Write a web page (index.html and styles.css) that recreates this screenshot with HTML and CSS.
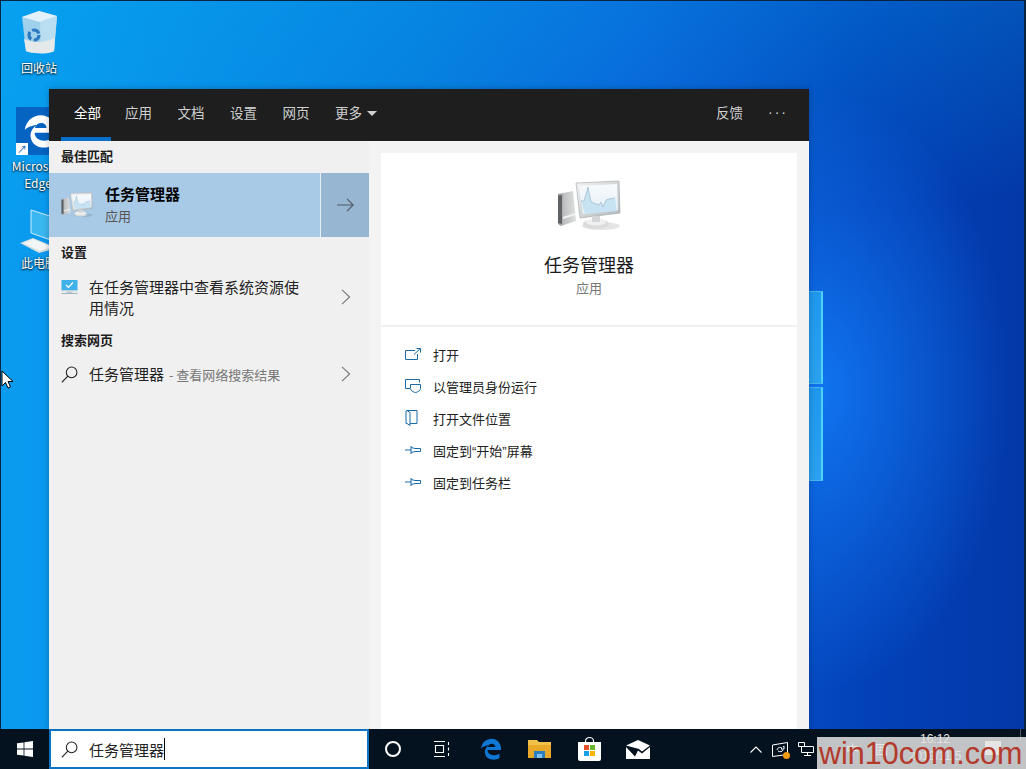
FILE: index.html
```html
<!DOCTYPE html>
<html lang="zh-CN">
<head>
<meta charset="utf-8">
<title>任务管理器</title>
<link rel="stylesheet" href="styles.css">
</head>
<body>
<svg width="0" height="0" class="defs">
  <defs>
    <linearGradient id="bezel" x1="0" y1="0" x2="1" y2="1"><stop offset="0" stop-color="#f4f4f4"/><stop offset="1" stop-color="#b4b8ba"/></linearGradient>
    <linearGradient id="tower" x1="0" y1="0" x2="1" y2="0"><stop offset="0" stop-color="#8b8e90"/><stop offset=".35" stop-color="#bfc1c2"/><stop offset="1" stop-color="#dfe0e0"/></linearGradient>
    <linearGradient id="screen" x1="0" y1="0" x2="0" y2="1"><stop offset="0" stop-color="#f7fafc"/><stop offset="1" stop-color="#e4f0f8"/></linearGradient>
    <symbol id="taskmgr" viewBox="0 0 64 52">
      <ellipse cx="44" cy="46" rx="19" ry="4" fill="#000" opacity=".1"/>
      <path d="M1 14l15-3 3 30-15 5c-2-1-3-2-3-4z" fill="url(#tower)"/>
      <path d="M1 16l4-1v29l-4-1z" fill="#5f6264"/>
      <path d="M6 37l12-4v2l-12 4z" fill="#f2f2f2"/>
      <path d="M19 3l43-2 1 32-40 5z" fill="url(#bezel)" stroke="#9ea3a6" stroke-width=".6"/>
      <path d="M22 6l38-2 1 26-35 4z" fill="url(#screen)"/>
      <path d="M24 21l3 0 4-14 3 15 5 2 3 1 2-3 2 5 3-7 3-1 6-1 2 13-32 3z" fill="#c6e2f3"/>
      <path d="M24 21l3 0 4-14 3 15 5 2 3 1 2-3 2 5 3-7 3-1 6-1" fill="none" stroke="#9db8c9" stroke-width=".7"/>
      <ellipse cx="39" cy="44" rx="13" ry="5" fill="#d9dbdc"/>
      <ellipse cx="39" cy="42" rx="10" ry="3.5" fill="#f0f0f0"/>
      <rect x="35" y="36" width="8" height="6" fill="#d3d5d6"/>
    </symbol>
    <symbol id="search" viewBox="0 0 16 16">
      <circle cx="10" cy="6" r="5" fill="none" stroke="currentColor" stroke-width="1"/>
      <path d="M6.400 9.600L.8 15.400" stroke="currentColor" stroke-width="1.100" fill="none"/>
    </symbol>
    <symbol id="chev" viewBox="0 0 10 16">
      <path d="M1 .8L8.600 8 1 15.200" fill="none" stroke="currentColor" stroke-width="1.100"/>
    </symbol>
    <symbol id="pin" viewBox="0 0 16 10">
      <path d="M0 5h6M6 1v8M6 2.500l4 1h5.500v3H10l-4 1" fill="none" stroke="currentColor" stroke-width="1"/>
    </symbol>
    <symbol id="edge" viewBox="0 0 24 24">
      <path d="M1.200 11.200C2.200 4.600 7.200.8 12.600.8c6.200 0 10.600 4.600 10.400 12.400H8.200c.2 5.600 7.600 7.400 13 3.600v5.400c-6.200 3-14.600 1.600-15.800-5.800C4.800 12.800 7 9.400 10 7.600 6.400 8 3 9.400 1.200 11.200zM8.400 9.800h8.200c0-4.600-7.200-4.800-8.200 0z" fill-rule="evenodd" fill="currentColor"/>
    </symbol>
  </defs>
</svg>

<main class="desktop">
  <div class="wallpaper-glow"></div>
  <div class="win-logo">
    <span class="pane pane-top"></span>
    <span class="pane pane-bottom"></span>
  </div>

  <div class="desk-icon icon-bin">
    <svg viewBox="0 0 40 44" width="40" height="44">
      <path d="M3 7l17-6 18 5-3 35c-5 3-23 3-28 0z" fill="#9fd0ec"/>
      <path d="M3 7l17-6 18 5-17 6z" fill="#e3f2fa"/>
      <path d="M21 12l17-6-3 35c-3 2-8 2.500-13 2.500z" fill="#b9def2"/>
      <path d="M5 29c10 4 20 4 31-1l-1 13c-5 3-23 3-28 0z" fill="#e6e9ea"/>
      <circle cx="15" cy="25" r="5" fill="none" stroke="#2a78c0" stroke-width="3.200" stroke-dasharray="8 2.500"/>
    </svg>
    <span class="desk-label">回收站</span>
  </div>
  <div class="desk-icon icon-edge">
    <div class="edge-tile"><svg class="edge-tile-glyph"><use href="#edge"/></svg><span class="shortcut">↗</span></div>
    <span class="desk-label">Microsoft<br>Edge</span>
  </div>
  <div class="desk-icon icon-pc">
    <svg viewBox="0 0 40 44" width="40" height="44">
      <path d="M12 1l28 9v24L12 24z" fill="#3ab6f0" stroke="#cdeefb" stroke-width="1"/>
      <path d="M1 34l13-5 24 10-18 5z" fill="#d5dcdf"/>
      <path d="M4 34l10-4 19 8-13 4z" fill="#f2f5f6"/>
    </svg>
    <span class="desk-label">此电脑</span>
  </div>

  <svg class="cursor" viewBox="0 0 12 19" width="12" height="19"><path d="M1 1v15l3.500-3.500 2.500 5.500 2.500-1-2.500-5.500H12z" fill="#fff" stroke="#000" stroke-width="1"/></svg>

  <section class="search-panel">
    <header class="tabs">
      <nav class="tab-list">
        <span class="tab tab-active">全部</span>
        <span class="tab">应用</span>
        <span class="tab">文档</span>
        <span class="tab">设置</span>
        <span class="tab">网页</span>
        <span class="tab">更多<i class="caret"></i></span>
      </nav>
      <div class="tab-tools">
        <span class="tab">反馈</span>
        <span class="dots">···</span>
      </div>
    </header>
    <div class="panel-body">
      <div class="results">
        <h2 class="group-title first">最佳匹配</h2>
        <div class="best">
          <div class="best-main">
            <svg class="best-icon"><use href="#taskmgr"/></svg>
            <div class="best-text">
              <strong>任务管理器</strong>
              <span>应用</span>
            </div>
          </div>
          <div class="best-arrow">
            <svg viewBox="0 0 17 14" width="17" height="14"><path d="M0 7h16M10 .8L16.200 7 10 13.200" fill="none" stroke="currentColor" stroke-width="1.100"/></svg>
          </div>
        </div>
        <h2 class="group-title">设置</h2>
        <div class="row row-tall">
          <svg class="row-icon" viewBox="0 0 16 15" width="16" height="15">
            <rect x="0" y="0" width="16" height="10.500" fill="#3fb0e8"/>
            <path d="M4.500 5l2.500 2.500 4.500-5" fill="none" stroke="#fff" stroke-width="1.200"/>
            <rect x="0" y="10.500" width="16" height="1" fill="#d3dbe0"/>
            <rect x="0" y="13" width="16" height="1" fill="#9db4c2"/>
            <rect x="5" y="11.500" width="6" height="1.500" fill="#c4c9cc"/>
          </svg>
          <span class="row-text">在任务管理器中查看系统资源使用情况</span>
          <svg class="row-chev"><use href="#chev"/></svg>
        </div>
        <h2 class="group-title group-web">搜索网页</h2>
        <div class="row row-web">
          <svg class="row-icon search-icon"><use href="#search"/></svg>
          <span class="row-text">任务管理器<small> - 查看网络搜索结果</small></span>
          <svg class="row-chev"><use href="#chev"/></svg>
        </div>
      </div>
      <aside class="detail-wrap">
        <div class="detail">
          <div class="detail-head">
            <svg class="detail-icon"><use href="#taskmgr"/></svg>
            <h1>任务管理器</h1>
            <p>应用</p>
          </div>
          <ul class="actions">
            <li>
              <svg viewBox="0 0 16 12" width="16" height="12"><path d="M10 2.500H.500v9h12V6M9 6.500L15 .800M11.500.500H15.500V4.500" fill="none" stroke="currentColor"/></svg>
              打开
            </li>
            <li>
              <svg viewBox="0 0 16 14" width="16" height="14"><path d="M5 9.500H.500v-9h14v3M5.500 5.500h10v4c0 2-2.500 3.500-5 4-2.500-.5-5-2-5-4z" fill="none" stroke="currentColor"/></svg>
              以管理员身份运行
            </li>
            <li>
              <svg viewBox="0 0 13 16" width="13" height="16"><path d="M2 .500h10v13H5M2 .500l3 2v13l-3-2H1V1z" fill="none" stroke="currentColor"/></svg>
              打开文件位置
            </li>
            <li><svg width="16" height="10"><use href="#pin"/></svg>固定到“开始”屏幕</li>
            <li><svg width="16" height="10"><use href="#pin"/></svg>固定到任务栏</li>
          </ul>
        </div>
      </aside>
    </div>
  </section>
</main>

<footer class="taskbar">
  <div class="start">
    <svg viewBox="0 0 16 16" width="16" height="16"><path d="M0 2.300l6.600-.9v6.200H0zM7.400 1.300L16 0v7.600H7.400zM0 8.400h6.600v6.200L0 13.700zM7.400 8.400H16V16l-8.600-1.300z" fill="#fff"/></svg>
  </div>
  <div class="searchbox">
    <svg class="search-icon"><use href="#search"/></svg>
    <span class="query">任务管理器</span><i class="caret-line"></i>
  </div>
  <div class="task-icons">
    <span class="task-slot"><i class="cortana"></i></span>
    <span class="task-slot">
      <svg viewBox="0 0 16 16" width="16" height="16"><path d="M0 .500h11M0 15.500h11M1.500 4.500h8v7h-8zM14.500 1v3M14.500 6.500v3M14.500 12v3" fill="none" stroke="#fff" stroke-width="1.100"/></svg>
    </span>
    <span class="task-slot"><svg class="task-edge"><use href="#edge"/></svg></span>
    <span class="task-slot">
      <svg viewBox="0 0 23 20" width="23" height="20"><path d="M0 1h9l2 2h12v16H0z" fill="#f0c24a"/><path d="M0 6h23v13H0z" fill="#e8a92b"/><rect x="6" y="12" width="11" height="7" fill="#2a7fc0"/><rect x="9" y="15" width="5" height="4" fill="#7fc1e8"/></svg>
    </span>
    <span class="task-slot">
      <svg viewBox="0 0 23 24" width="23" height="24"><path d="M7.500 6V4a4 3.500 0 0 1 8 0v2" fill="none" stroke="#eee" stroke-width="1.200"/><path d="M0 5h23v17a2 2 0 0 1-2 2H2a2 2 0 0 1-2-2z" fill="#fff"/><rect x="6" y="8" width="5" height="5" fill="#e8502a"/><rect x="12" y="8" width="5" height="5" fill="#6cb52d"/><rect x="6" y="14" width="5" height="5" fill="#1ba1e2"/><rect x="12" y="14" width="5" height="5" fill="#f7b500"/></svg>
    </span>
    <span class="task-slot">
      <svg viewBox="0 0 24 19" width="24" height="19"><path d="M0 5.500L12 0l12 5.500-8 6-3-2.500zM0 7v12h24V7l-8 6.500-4-3-3 6z" fill="#fff"/></svg>
    </span>
  </div>
  <div class="tray">
    <svg viewBox="0 0 12 7" width="12" height="7"><path d="M.500 6.500L6 1l5.500 5.500" fill="none" stroke="#fff" stroke-width="1.100"/></svg>
    <span class="tray-action">
      <svg viewBox="0 0 16 15" width="16" height="15"><path d="M.500 3l15-2.500v12l-15 2zM5 8c1-3 3-3 5-2l-1 1h3V4l-1 1M11 8c-1 2-3 2-5 1" fill="none" stroke="#fff"/></svg>
      <i class="badge"></i>
    </span>
    <svg viewBox="0 0 16 14" width="16" height="14"><path d="M.500.500h6v4M.500.500v4h6M3.500 4.500h12v6h-12zM9.500 10.500v3M6 13.500h7" fill="none" stroke="#fff"/></svg>
  </div>
  <div class="tray-labels"><span>中</span><span>囲</span></div>
  <div class="clock">
    <span>16:12</span>
    <span>2019/11/5</span>
  </div>
  <div class="notify"></div>
  <div class="desktop-edge"></div>
  <div class="watermark">win10com.com</div>
</footer>
</body>
</html>
```
FILE: styles.css
```css
* { box-sizing: border-box; }
html, body { margin: 0; padding: 0; }
body {
  width: 1026px;
  height: 769px;
  overflow: hidden;
  display: flex;
  flex-direction: column;
  font-family: "Noto Sans CJK SC", "Liberation Sans", sans-serif;
  position: relative;
  background: #04111f;
}
.defs { position: absolute; }

.desktop {
  position: relative;
  flex: 1;
  overflow: hidden;
  border: 1px solid #0a2440;
  border-bottom: 0;
  border-right-width: 2px;
  background: linear-gradient(90deg, #0a9cf0 0%, #0878dc 40%, #0a5ed6 62%, #0341b8 85%, #0338a8 100%);
}
.wallpaper-glow {
  position: absolute;
  inset: 0;
  background:
    radial-gradient(ellipse 190px 300px at 820px 390px, rgba(20,130,255,.75), rgba(20,120,255,0) 100%),
    linear-gradient(175deg, rgba(0,170,240,.35) 0%, rgba(0,120,230,0) 35%);
}
.win-logo {
  position: absolute;
  left: 780px;
  top: 290px;
  width: 42px;
  display: flex;
  flex-direction: column;
  gap: 3px;
}
.pane {
  display: block;
  width: 42px;
  background: linear-gradient(135deg, #1a94ee, #2aa2ee);
  border-right: 2px solid #4fd1f4;
  border-top: 1px solid #46b5ec;
  border-bottom: 1px solid #46b5ec;
}
.pane-top { height: 93px; }
.pane-bottom { height: 94px; }

.desk-icon {
  position: absolute;
  width: 76px;
  display: flex;
  flex-direction: column;
  align-items: center;
  color: #fff;
  font-size: 12px;
  line-height: 17px;
  text-align: center;
  text-shadow: 0 1px 2px rgba(0,0,0,.9), 0 0 2px rgba(0,0,0,.5);
}
.icon-bin { left: 0; top: 9px; }
.icon-bin .desk-label { margin-top: 5px; }
.icon-edge { left: -1px; top: 106px; }
.icon-edge .desk-label { margin-top: 2px; }
.edge-tile {
  position: relative;
  width: 48px;
  height: 48px;
  margin-left: 4px;
  background: #0563c1;
  color: #fff;
  display: flex;
  align-items: center;
  justify-content: center;
}
.edge-tile-glyph { width: 34px; height: 34px; }
.shortcut {
  position: absolute;
  left: 0;
  bottom: 0;
  width: 12px;
  height: 12px;
  background: #fff;
  color: #1a5fb4;
  font-size: 10px;
  line-height: 12px;
  text-shadow: none;
}
.icon-pc { left: 0; top: 208px; }
.icon-pc .desk-label { margin-top: 1px; }
.cursor { position: absolute; left: 0; top: 369px; }

.search-panel {
  position: absolute;
  left: 48px;
  top: 88px;
  width: 760px;
  height: 640px;
  display: flex;
  flex-direction: column;
  box-shadow: 0 0 6px rgba(0,0,0,.25);
}
.tabs {
  height: 52px;
  flex: none;
  background: #1e1e1e;
  color: #d0d0d0;
  display: flex;
  justify-content: space-between;
  font-size: 13.500px;
}
.tab-list { display: flex; padding-left: 12px; }
.tab {
  position: relative;
  display: flex;
  align-items: center;
  padding: 0 13px 2px;
  height: 48px;
  line-height: 20px;
  white-space: nowrap;
}
.tab-list .tab { width: 52.500px; }
.tab-list .tab-active { color: #fff; width: 50px; margin-right: 1px; }
.tab-active::after {
  content: "";
  position: absolute;
  left: 0;
  right: 0;
  bottom: -4px;
  height: 4px;
  background: #0a6fc9;
}
.caret {
  margin-left: 5px;
  margin-top: 2px;
  border: 5px solid transparent;
  border-top: 5px solid #d0d0d0;
  border-bottom: 0;
}
.tab-tools { display: flex; align-items: flex-start; padding-right: 21px; }
.tab-tools .tab { padding: 0 0 2px; margin-right: 25px; }
.dots {
  width: 20px;
  height: 46px;
  line-height: 46px;
  color: #d0d0d0;
  font-family: "Liberation Sans", sans-serif;
  font-size: 14px;
  letter-spacing: 2px;
  white-space: nowrap;
}

.panel-body { flex: 1; display: flex; min-height: 0; }
.results { width: 320px; flex: none; background: #f0f0f0; color: #1a1a1a; }
.group-title {
  margin: 0;
  height: 24px;
  padding-left: 12px;
  font-size: 13px;
  font-weight: 700;
  line-height: 22px;
  color: #1c1c1c;
}
.group-title.group-web { line-height: 24px; }
.group-title.first { height: 32px; line-height: 30px; }
.best { display: flex; height: 64px; margin-bottom: 4px; }
.best-main {
  flex: 1;
  display: flex;
  align-items: center;
  padding-left: 12px;
  background: #a9cae6;
}
.best-icon { width: 32px; height: 26px; flex: none; filter: blur(.3px); }
.best-text {
  margin-left: 12px;
  display: flex;
  flex-direction: column;
  line-height: 20px;
}
.best-text strong { font-size: 15px; color: #000; font-weight: 700; }
.best-text span { font-size: 13px; color: #555; margin-top: 2px; }
.best-arrow {
  width: 49px;
  flex: none;
  border-left: 1px solid #e8f0f7;
  background: #97b6d1;
  color: #4f5a65;
  display: flex;
  align-items: center;
  justify-content: center;
}
.row {
  position: relative;
  display: flex;
  align-items: center;
  padding-left: 12px;
  height: 44px;
  font-size: 15px;
  color: #222;
}
.row-tall { height: 63px; }
.row-tall .row-icon { align-self: flex-start; margin-top: 15px; }
.row-icon { width: 17px; flex: none; }
.row-text {
  margin-left: 11px;
  width: 216px;
  line-height: 21px;
}
.row-web .row-text { white-space: nowrap; }
.row-text small { font-size: 13px; color: #777; white-space: nowrap; margin-left: 2px; }
.row-chev {
  position: absolute;
  left: 292px;
  top: 50%;
  margin-top: -8px;
  width: 10px;
  height: 16px;
  color: #777;
}
.search-icon { width: 17px; height: 17px; color: #222; }

.detail-wrap { flex: 1; background: #f3f3f3; padding: 12px 12px 0; display: flex; min-width: 0; }
.detail { flex: 1; background: #fff; }
.detail-head {
  height: 174px;
  border-bottom: 2px solid #f0f0f0;
  display: flex;
  flex-direction: column;
  align-items: center;
  padding-top: 27px;
}
.detail-icon { width: 64px; height: 52px; filter: blur(.3px); }
.detail-head h1 {
  margin: 19px 0 0;
  font-size: 18px;
  font-weight: 400;
  line-height: 26px;
  color: #1a1a1a;
}
.detail-head p { margin: 1px 0 0; font-size: 13px; line-height: 20px; color: #777; }
.actions { list-style: none; margin: 0; padding: 11px 0 0 24px; }
.actions li {
  height: 32px;
  display: flex;
  align-items: center;
  font-family: "Liberation Sans", "Noto Sans CJK SC", sans-serif;
  font-size: 13px;
  color: #222;
  position: relative;
  padding-left: 28px;
}
.actions svg {
  position: absolute;
  left: 0;
  top: 50%;
  transform: translateY(-50%);
  color: #1b6aa8;
}

.taskbar {
  height: 40px;
  flex: none;
  position: relative;
  display: flex;
  align-items: stretch;
  background: #04111f;
}
.start { width: 49px; flex: none; display: flex; align-items: center; justify-content: center; }
.searchbox {
  width: 320px;
  flex: none;
  background: #fff;
  border: 2px solid #0d74c4;
  display: flex;
  align-items: center;
  padding-left: 10px;
  font-size: 15px;
  color: #222;
}
.query { margin-left: 11px; }
.caret-line { width: 1px; height: 22px; background: #000; }
.task-icons { display: flex; flex: none; }
.task-slot { width: 49.200px; display: flex; align-items: center; justify-content: center; flex: none; }
.task-slot:first-child { width: 48px; }
.task-edge { width: 22px; height: 22px; color: #0f78d4; }
.cortana { width: 16px; height: 16px; border: 2px solid #fff; border-radius: 50%; }
.tray {
  position: absolute;
  left: 750px;
  top: 0;
  height: 40px;
  display: flex;
  align-items: center;
  gap: 10px;
}
.tray-action { position: relative; display: flex; }
.badge {
  position: absolute;
  right: -2px;
  bottom: -2px;
  width: 7px;
  height: 7px;
  border-radius: 50%;
  background: #f39c12;
}
.tray-labels {
  position: absolute;
  left: 846px;
  top: 11px;
  display: flex;
  gap: 16px;
  color: #fff;
  font-size: 13px;
  line-height: 18px;
}
.clock {
  position: absolute;
  left: 900px;
  top: 2px;
  width: 70px;
  color: #e8e8e8;
  font-size: 12px;
  line-height: 17px;
  text-align: center;
  display: flex;
  flex-direction: column;
  font-family: "Liberation Sans", sans-serif;
}
.notify {
  position: absolute;
  left: 985px;
  top: 12px;
  width: 16px;
  height: 14px;
  background: #fff;
}
.desktop-edge {
  position: absolute;
  left: 1020px;
  top: 0;
  width: 1px;
  height: 12px;
  background: #4a5663;
}
.watermark {
  position: absolute;
  left: 817px;
  top: 8px;
  width: 209px;
  height: 32px;
  padding-left: 2px;
  background: rgba(225,225,225,.86);
  color: #b33a2b;
  font-family: "Liberation Sans", sans-serif;
  font-size: 30.500px;
  line-height: 32px;
  white-space: nowrap;
  overflow: hidden;
}
```
